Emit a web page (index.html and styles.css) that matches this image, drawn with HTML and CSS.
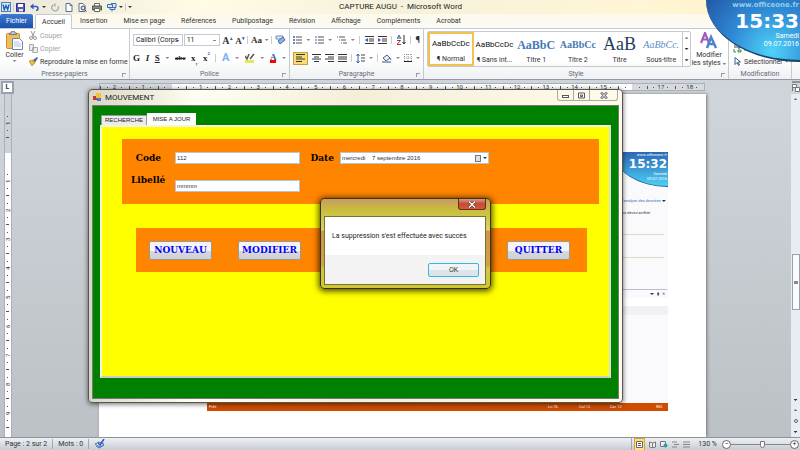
FILE: index.html
```
<!DOCTYPE html>
<html lang="fr">
  <head>
    <meta charset="UTF-8" />
    <meta name="viewport" content="width=device-width, initial-scale=1.0" />
    <title>CAPTURE AUGU - Microsoft Word</title>
    <link rel="stylesheet" href="styles.css">
  </head>
  <body>
    <div class="word">
      <!-- Title bar -->
      <header class="titlebar">
        <div class="quick">
          <svg width="10" height="10" viewBox="0 0 10 10"><rect x="0.5" y="0.5" width="9" height="9" fill="#dceafa" stroke="#4a7fc0"/><path d="M2 2.5l1.3 5L5 3.5l1.7 4 1.3-5" fill="none" stroke="#1c5fae" stroke-width="1.4"/></svg>
          <i class="sep"></i>
          <svg width="9" height="9" viewBox="0 0 9 9"><path d="M0.5 0.5h8v8h-8z" fill="#5a55b5" stroke="#36328a"/><path d="M2 1h5v3H2z" fill="#fff"/><path d="M3 6h4v2.500H3z" fill="#dfe3f5"/></svg>
          <svg class="undo" width="10" height="8" viewBox="0 0 10 8"><path d="M2 3.500h4a2 2 0 0 1 0 4" fill="none" stroke="#3157c4" stroke-width="1.500"/><path d="M0 3.500l3.500-3v6z" fill="#3157c4"/></svg>
          <b class="caret dark"></b>
          <svg class="gap" width="9" height="9" viewBox="0 0 9 9"><path d="M2 2a3.300 3.300 0 1 0 5 1" fill="none" stroke="#a9acb2" stroke-width="1.300"/><path d="M4.500 0v4L2 2z" fill="#a9acb2"/></svg>
          <svg class="gap" width="8" height="9" viewBox="0 0 8 9"><path d="M1 0.500h4l2 2v6H1z" fill="#fff" stroke="#56708f"/><path d="M5 0.500v2h2" fill="none" stroke="#56708f"/></svg>
          <svg class="gap" width="9" height="9" viewBox="0 0 9 9"><path d="M1 0.500h4l2 2v6H1z" fill="#fff" stroke="#56708f"/><circle cx="5" cy="5" r="2" fill="#cfe3f7" stroke="#446"/><path d="M6.500 6.500l2 2" stroke="#446"/></svg>
          <svg class="gap" width="10" height="9" viewBox="0 0 10 9"><path d="M2.500 3V0.500h5V3" fill="#fff" stroke="#666"/><path d="M0.500 3h9v4h-9z" fill="#888" stroke="#555"/><path d="M2.500 5.500h5v3h-5z" fill="#fff" stroke="#666"/><path d="M7 5h2v2H7z" fill="#49a34b"/></svg>
          <svg class="gap" width="10" height="9" viewBox="0 0 10 9"><path d="M0.500 1.500h5v3h-5zM4 0.500h5v4H7M3 4.500h5v2H3z" fill="#d6e7f9" stroke="#3a6fb0"/><path d="M5 6.500v2" stroke="#3a6fb0"/></svg>
          <b class="caret dark"></b>
          <i class="sep"></i>
          <b class="caret dark"></b>
        </div>
        <h1>CAPTURE AUGU &nbsp;- &nbsp;Microsoft Word</h1>
      </header>

      <nav class="tabs">
        <button class="file">Fichier</button>
        <button class="active">Accueil</button>
        <button>Insertion</button>
        <button>Mise en page</button>
        <button>Références</button>
        <button>Publipostage</button>
        <button>Révision</button>
        <button>Affichage</button>
        <button>Compléments</button>
        <button>Acrobat</button>
      </nav>

      <!-- Ribbon -->
      <div class="ribbon">
        <section class="group clipboard">
          <div class="tools">
            <button class="paste">
              <svg width="17" height="19" viewBox="0 0 17 19"><rect x="0.500" y="2.500" width="13" height="15" rx="1" fill="#f0bd5c" stroke="#c98e33"/><path d="M3.500 3.500h7V2H9a2 2 0 0 0-4 0H3.500z" fill="#c3c6ca" stroke="#77797d"/><path d="M6.500 7.500h7l3 3v8h-10z" fill="#fff" stroke="#6f87a5"/><path d="M8 11h5M8 13h7M8 15h7" stroke="#aec2da"/></svg>
              <span>Coller</span>
              <b class="caret"></b>
            </button>
            <div class="stack">
              <button class="off"><svg width="9" height="9" viewBox="0 0 9 9"><path d="M2 0l3 6M6 0L3 6" stroke="#999"/><circle cx="2" cy="7" r="1.500" fill="none" stroke="#999"/><circle cx="6" cy="7" r="1.500" fill="none" stroke="#999"/></svg>Couper</button>
              <button class="off"><svg width="9" height="9" viewBox="0 0 9 9"><path d="M0.500 0.500h4v6h-4zM3.500 3.500h5v5h-5z" fill="#eee" stroke="#aaa"/></svg>Copier</button>
              <button><svg width="9" height="9" viewBox="0 0 9 9"><path d="M0 4l4-1 2 3-3 3z" fill="#f2ba3d" stroke="#a87919" stroke-width=".6"/><path d="M4 3l2 2.500L9 1 8 0z" fill="#4c6b94"/></svg>Reproduire la mise en forme</button>
            </div>
          </div>
          <h2>Presse-papiers<i class="launcher"></i></h2>
        </section>

        <section class="group font">
          <div class="tools rows">
            <div class="row">
              <select class="family" aria-label="Police"><option>Calibri (Corps</option></select><select class="size" aria-label="Taille"><option>11</option></select>
              <span class="serif big">A<sup>▴</sup></span>
              <span class="serif">A<sup>▾</sup></span>
              <i class="sep"></i>
              <span class="serif">Aa</span><b class="caret"></b>
              <i class="sep"></i>
              <svg width="11" height="10" viewBox="0 0 11 10"><path d="M1 1h7v3H1z" fill="#dde9f8" stroke="#6e90bd"/><path d="M3 6l5-4 2 3-5 4z" fill="#8fb5df" stroke="#426a9c"/></svg>
            </div>
            <div class="row letters">
              <b>G</b><em>I</em><u>S</u><b class="caret"></b><s>abc</s><span>x<sub>,</sub></span><span>x<sup>²</sup></span>
              <i class="sep"></i>
              <span class="effect">A</span><b class="caret"></b>
              <svg width="10" height="10" viewBox="0 0 10 10"><path d="M0 7h9v3H0z" fill="#e7e75a"/><path d="M0 3l2 3 2-5M5 6l4-5" fill="none" stroke="#555" stroke-width="1.500"/></svg><b class="caret"></b>
              <span class="color">A</span><b class="caret"></b>
            </div>
          </div>
          <h2>Police<i class="launcher"></i></h2>
        </section>

        <section class="group paragraph">
          <div class="tools rows">
            <div class="row">
              <svg width="9" height="8" viewBox="0 0 9 8"><path d="M0 1h2M0 4h2M0 7h2" stroke="#3562a8" stroke-width="1.500"/><path d="M3 1h6M3 4h6M3 7h6" stroke="#555"/></svg><b class="caret"></b>
              <svg width="9" height="8" viewBox="0 0 9 8"><path d="M1 0v2M1 3v2M1 6v2" stroke="#3562a8"/><path d="M3 1h6M3 4h6M3 7h6" stroke="#555"/></svg><b class="caret"></b>
              <svg width="10" height="8" viewBox="0 0 10 8"><path d="M0 1h1M2 4h1M4 7h1" stroke="#3562a8"/><path d="M2 1h6M4 4h5M6 7h4" stroke="#555"/></svg><b class="caret"></b>
              <i class="sep"></i>
              <svg width="9" height="8" viewBox="0 0 9 8"><path d="M0 .5h9M4 3h5M4 5h5M0 7.500h9" stroke="#333"/><path d="M3 2v4L0 4z" fill="#3562a8"/></svg>
              <svg width="9" height="8" viewBox="0 0 9 8"><path d="M0 .5h9M4 3h5M4 5h5M0 7.500h9" stroke="#333"/><path d="M0 2v4l3-2z" fill="#3562a8"/></svg>
              <i class="sep"></i>
              <svg width="9" height="10" viewBox="0 0 9 10"><path d="M0 4l2-4 2 4M1 3h2" fill="none" stroke="#3562a8"/><path d="M0 5.500h3.500L0 9.500h4" fill="none" stroke="#a33"/><path d="M7 0v9M5.500 7L7 9l1.500-2" fill="none" stroke="#333"/></svg>
              <i class="sep"></i>
              <span class="pilcrow">¶</span>
            </div>
            <div class="row">
              <button class="on" aria-label="Gauche"><svg width="9" height="8" viewBox="0 0 9 8"><path d="M0 .5h9M0 3h6M0 5h9M0 7.500h6" stroke="#333"/></svg></button>
              <svg width="9" height="8" viewBox="0 0 9 8"><path d="M0 .5h9M2 3h5M0 5h9M2 7.500h5" stroke="#333"/></svg>
              <svg width="9" height="8" viewBox="0 0 9 8"><path d="M0 .5h9M3 3h6M0 5h9M3 7.500h6" stroke="#333"/></svg>
              <svg width="9" height="8" viewBox="0 0 9 8"><path d="M0 .5h9M0 3h9M0 5h9M0 7.500h9" stroke="#333"/></svg>
              <i class="sep"></i>
              <svg width="9" height="9" viewBox="0 0 9 9"><path d="M2 0v9M.5 2L2 0l1.500 2M.5 7L2 9l1.500-2" fill="none" stroke="#3562a8"/><path d="M5 1h4M5 4h4M5 7h4" stroke="#444"/></svg><b class="caret"></b>
              <i class="sep"></i>
              <svg width="10" height="9" viewBox="0 0 10 9"><path d="M1 4l4-3 3 3-4 3z" fill="#e4edf8" stroke="#4a668c"/><path d="M8 4l1 2" stroke="#3562a8"/><path d="M0 8h9" stroke="#9ab" stroke-width="2"/></svg><b class="caret"></b>
              <svg width="8" height="8" viewBox="0 0 8 8"><path d="M.5 0v7M4 0v7M7.500 0v7M0 .5h8M0 4h8" stroke="#999" stroke-dasharray="1 1"/><path d="M0 7.500h8" stroke="#222"/></svg><b class="caret"></b>
            </div>
          </div>
          <h2>Paragraphe<i class="launcher"></i></h2>
        </section>

        <section class="group style">
          <div class="tools">
            <div class="gallery">
              <button class="chosen"><span class="sample">AaBbCcDc</span>¶ Normal</button>
              <button><span class="sample">AaBbCcDc</span>¶ Sans int...</button>
              <button><span class="sample t1">AaBbC</span>Titre 1</button>
              <button><span class="sample t2">AaBbCc</span>Titre 2</button>
              <button><span class="sample t3">AaB</span>Titre</button>
              <button><span class="sample t4">AaBbCc.</span>Sous-titre</button>
              <div class="arrows"><b class="caret up"></b><b class="caret dark"></b><b class="caret dark"></b></div>
            </div>
            <button class="modify">
              <svg width="18" height="17" viewBox="0 0 18 17"><path d="M1 11L5 1l4 10M2.500 7.500h5" fill="none" stroke="#a559b8" stroke-width="2.200"/><path d="M7 16l4-11 5 11M8.500 12h6" fill="none" stroke="#4b84cf" stroke-width="2.500"/></svg>
              <span>Modifier</span>
              <span>les styles <b class="caret"></b></span>
            </button>
          </div>
          <h2>Style<i class="launcher"></i></h2>
        </section>

        <section class="group edit">
          <div class="tools">
            <div class="stack">
              <button><svg width="9" height="9" viewBox="0 0 9 9"><path d="M1 1h3M1 3h3M5 0v4h2V2H5" fill="none" stroke="#444"/><path d="M1 5v3h2M5 6h3v2H5z" fill="none" stroke="#27903b"/></svg>Re</button>
              <button><svg width="9" height="9" viewBox="0 0 9 9"><path d="M2 .5v7l2-2 1.500 3 1-.5L5 5h2.500z" fill="#fff" stroke="#3c5f93"/></svg>Sélectionner <b class="caret"></b></button>
            </div>
          </div>
          <h2>Modification</h2>
        </section>
      </div>

      <!-- Horizontal ruler -->
      <div class="ruler-row">
        <button class="tabstop">L</button>
        <div class="ruler">
          <span>2</span><span>1</span><span></span><span>1</span><span>2</span><span>3</span><span>4</span><span>5</span><span>6</span><span>7</span><span>8</span><span>9</span><span>10</span><span>11</span><span>12</span><span>13</span><span>14</span><span>15</span><span></span><span>17</span><span>18</span>
        </div>
        <button class="toggle" aria-label="Règle"><svg width="8" height="8" viewBox="0 0 8 8"><path d="M.5 7V.5h4v3h-4M3.500 3.500h4v4h-4z" fill="#fff" stroke="#777"/></svg></button>
      </div>

      <!-- Document -->
      <main class="document">
        <div class="vruler">
          <span></span><span>1</span><span></span><span>1</span><span>2</span><span>3</span><span>4</span><span>5</span><span>6</span><span>7</span><span>8</span><span>9</span><span></span>
        </div>
        <article class="page">
          <div class="capture">
            <div class="capture-body">
              <div class="mini-clock">
                <span>www.officeone.fr</span>
                <strong>15:32</strong>
                <span>Samedi</span>
                <span>09.07.2016</span>
              </div>
              <p class="blue">l'analyse des données <b class="caret dark"></b></p>
              <p>us devez arrêter</p>
              <hr /><hr />
              <div class="pane"><b class="caret dark"></b><span>▮</span><span>✕</span></div>
              <div class="strip"></div>
            </div>
            <div class="capture-status"><span>Prêt</span><span>Ln 76</span><span>Col 12</span><span>Car 12</span><span>INS</span></div>
          </div>
        </article>
        <div class="scrollbar">
          <b class="caret up"></b>
          <i class="thumb"></i>
          <b class="caret dark"></b>
          <b class="caret up"></b>
          <i class="dot"></i>
          <b class="caret dark"></b>
        </div>
      </main>

      <footer class="statusbar">
        <span>Page : 2 sur 2</span>
        <span>Mots : 0</span>
        <svg class="proof" width="11" height="10" viewBox="0 0 11 10"><path d="M1 5l4-2 5 2-4 3z" fill="#fff" stroke="#4b73b8"/><path d="M2 7l3 2 5-3" fill="none" stroke="#4b73b8"/><path d="M4 4l2 2 4-6" fill="none" stroke="#2c56c0" stroke-width="1.500"/></svg>
        <div class="views">
          <button class="on" aria-label="Page"><svg width="7" height="7" viewBox="0 0 7 7"><path d="M.5 .5h6v6h-6z" fill="#fff" stroke="#666"/><path d="M2 2.500h3M2 4.500h3" stroke="#555"/></svg></button>
          <svg width="7" height="7" viewBox="0 0 7 7"><path d="M.5 1l3 1 3-1v5l-3 1-3-1zM3.500 2v5" fill="#eee" stroke="#777"/></svg>
          <svg width="8" height="7" viewBox="0 0 8 7"><path d="M.5 .5h5v5h-5z" fill="#eee" stroke="#777"/><circle cx="5.500" cy="4.500" r="2" fill="#39a"/></svg>
          <svg width="7" height="7" viewBox="0 0 7 7"><path d="M0 1h5M2 3.500h5M0 6h5" stroke="#888"/></svg>
          <svg width="7" height="7" viewBox="0 0 7 7"><path d="M0 1h7M0 3.500h7M0 6h7" stroke="#888"/></svg>
        </div>
        <span class="zoom">130 %</span>
        <button class="round">−</button>
        <input type="range" min="0" max="100" value="54" aria-label="Zoom" />
        <button class="round">+</button>
      </footer>
    </div>

    <!-- Desktop clock gadget -->
    <aside class="clock">
      <span class="site">www.officeone.fr</span>
      <strong>15:33</strong>
      <span>Samedi</span>
      <span>09.07.2016</span>
    </aside>

    <!-- MOUVEMENT form -->
    <div class="window">
      <div class="caption">
        <svg width="9" height="9" viewBox="0 0 9 9"><path d="M0 3h4v4H0z" fill="#c23a2b"/><path d="M3 0h5v5H3z" fill="#f3c13c"/><path d="M4 5h4v3H4z" fill="#4b79c9"/></svg>
        <span>MOUVEMENT</span>
        <div class="controls">
          <button aria-label="Réduire"><svg width="7" height="7" viewBox="0 0 7 7"><rect x=".5" y="3.500" width="6" height="2" fill="#fff" stroke="#556"/></svg></button>
          <button aria-label="Agrandir"><svg width="7" height="7" viewBox="0 0 7 7"><path d="M.5 1h6v5h-6zM2.500 3h2v1.500h-2z" fill="#fff" stroke="#556"/></svg></button>
          <button class="wide" aria-label="Fermer"><svg width="8" height="7" viewBox="0 0 8 7"><path d="M1 .5l6 6M7 .5l-6 6" stroke="#556" stroke-width="2.400"/><path d="M1 .5l6 6M7 .5l-6 6" stroke="#fff"/></svg></button>
        </div>
      </div>
      <div class="client">
        <div class="form-tabs">
          <button>RECHERCHE</button>
          <button class="active">MISE A JOUR</button>
        </div>
        <div class="form-page">
          <form class="fields">
            <label for="code">Code</label>
            <input type="text" id="code" value="112" />
            <label class="near" for="date">Date</label>
            <div class="date">
              <input type="text" id="date" value="mercredi    7 septembre 2016" />
              <svg width="6" height="7" viewBox="0 0 6 7"><rect x=".5" y=".5" width="5" height="6" fill="#dce0e8" stroke="#777"/></svg>
              <b class="caret dark"></b>
            </div>
            <label class="up" for="libelle">Libellé</label>
            <input type="text" id="libelle" value="mmmm" />
          </form>
          <div class="actions">
            <button>NOUVEAU</button>
            <button>MODIFIER</button>
            <button class="last">QUITTER</button>
          </div>
        </div>
      </div>
    </div>

    <!-- Message box -->
    <div class="dialog" role="alertdialog" aria-label="Message">
      <button class="close" aria-label="Fermer"><svg width="8" height="7" viewBox="0 0 8 7"><path d="M1 .5l6 6M7 .5l-6 6" stroke="#533" stroke-width="2.600"/><path d="M1 .5l6 6M7 .5l-6 6" stroke="#fff" stroke-width="1.400"/></svg></button>
      <div class="message">
        <p>La suppression s'est effectuée avec succès</p>
        <div class="answer"><button>OK</button></div>
      </div>
    </div>
  </body>
</html>
```

FILE: styles.css
```
:root {
  --ui: Roboto, "Noto Sans", sans-serif;
  --form: "Liberation Sans", Arial, sans-serif;
  --book: "DejaVu Serif", serif;
  --line: #c5cad1;
}
* {
  margin: 0;
  padding: 0;
  box-sizing: border-box;
}

html,
body {
  height: 100%;
  overflow: hidden;
}
body {
  font-family: var(--ui);
  font-size: 7px;
  line-height: 10px;
  color: #333;
}
button,
input,
select {
  font: inherit;
  color: inherit;
  border: none;
  background: none;
}
svg {
  flex: none;
  display: block;
}

.word {
  display: flex;
  flex-direction: column;
  height: 100vh;
}

.caret {
  display: inline-block;
  flex: none;
  width: 4px;
  height: 2px;
  background: #888;
  clip-path: polygon(0 0, 100% 0, 50% 100%);
}
.caret.dark {
  background: #333;
}
.caret.up {
  background: #777;
  clip-path: polygon(50% 0, 100% 100%, 0 100%);
}
.sep {
  flex: none;
  width: 1px;
  height: 8px;
  background: #c8ccd2;
}

/* title bar and tabs */
.titlebar {
  display: flex;
  align-items: center;
  height: 14px;
  background: linear-gradient(90deg, #e9e7da, #fffbe6 25%, #f6f1dc 50%, #fff6d5 80%, #fdf0c4);
}
.quick {
  display: flex;
  align-items: center;
  gap: 2px;
  flex: 1;
  padding-left: 1px;
}
.quick .gap {
  margin-left: 3px;
}
.quick .undo {
  margin-left: 3px;
}
.titlebar h1 {
  font-size: 8px;
  font-weight: normal;
  color: #222;
}
.titlebar::after {
  content: "";
  flex: 1;
}
.tabs {
  display: flex;
  height: 15px;
  background: linear-gradient(#fdfaec, #fbfaf4);
  border-bottom: 1px solid var(--line);
}
.tabs button {
  padding: 0 8px;
  line-height: 14px;
}
.tabs .file {
  width: 33px;
  padding: 0;
  margin-right: 2px;
  background: linear-gradient(#3c7ad0, #1b51ab);
  border-radius: 2px 2px 0 0;
  color: #fff;
}
.tabs .active {
  height: 15px;
  width: 37px;
  padding: 0;
  background: #fff;
  border: 1px solid var(--line);
  border-bottom: none;
  border-radius: 2px 2px 0 0;
}

/* ribbon */
.ribbon {
  display: flex;
  height: 51px;
  background: linear-gradient(#fff 60%, #eef0f3);
  border-bottom: 1px solid #8f98a3;
}
.group {
  display: flex;
  flex-direction: column;
  border-right: 1px solid var(--line);
}
.clipboard {
  width: 130px;
}
.font {
  width: 160px;
}
.paragraph {
  width: 134px;
}
.style {
  width: 305px;
}
.edit {
  width: 63px;
}
.group h2 {
  position: relative;
  height: 10px;
  font-size: 7px;
  font-weight: normal;
  text-align: center;
  color: #666c75;
}
.launcher {
  position: absolute;
  right: 3px;
  bottom: 2px;
  width: 4px;
  height: 4px;
  border-top: 1px solid #999;
  border-left: 1px solid #999;
}
.tools {
  display: flex;
  flex: 1;
}
.tools.rows {
  flex-direction: column;
  padding: 4px 3px 0;
  gap: 4px;
}
.row {
  display: flex;
  align-items: center;
  justify-content: space-between;
  height: 14px;
}
.paste {
  display: flex;
  flex: none;
  flex-direction: column;
  align-items: center;
  width: 29px;
  padding-top: 2px;
}
.stack {
  display: flex;
  flex-direction: column;
}
.stack button {
  display: flex;
  align-items: center;
  gap: 2px;
  height: 13px;
  white-space: nowrap;
}
.stack .off {
  color: #a0a0a0;
}
.family,
.size {
  appearance: none;
  height: 12px;
  padding-left: 2px;
  border: 1px solid var(--line);
  background: linear-gradient(#888, #888) right 3px center / 3px 1px no-repeat;
  color: #222;
}
.family {
  width: 50px;
}
.size {
  width: 36px;
  margin-left: -2px;
}
.serif,
.letters {
  font-family: "Liberation Serif", serif;
  font-size: 9px;
  font-weight: bold;
}
.serif.big {
  font-size: 10px;
}
.serif sup {
  font-size: 5px;
  color: #3562a8;
}
.letters {
  color: #222;
}
.letters s {
  font-size: 7px;
}
.letters sub,
.letters sup {
  line-height: 0;
  color: #3562a8;
}
.letters .effect {
  font-family: var(--ui);
  font-size: 11px;
  color: #7fb2ea;
}
.letters .color {
  height: 10px;
  border-bottom: 3px solid #f00;
  line-height: 8px;
  color: #35558a;
}
.pilcrow {
  font-size: 9px;
  font-weight: bold;
}
.row .on {
  height: 13px;
  padding: 0 2px;
  background: #fbdc74;
  border: 1px solid #c7a03c;
}
.gallery {
  display: flex;
  width: 264px;
  height: 36px;
  margin: 2px 0 0 3px;
  border: 1px solid var(--line);
  border-radius: 2px;
}
.gallery button {
  flex: 1 0 0;
  display: flex;
  flex-direction: column;
  align-items: center;
  white-space: nowrap;
}
.gallery .chosen {
  border: 2px solid #f0c350;
}
.gallery .chosen .sample {
  height: 18px;
}
.sample {
  display: flex;
  align-items: flex-end;
  justify-content: center;
  height: 20px;
  margin-bottom: 3px;
  font-size: 8px;
  line-height: 14px;
  color: #111;
}
.sample.t1,
.sample.t2 {
  font: bold 12px/14px "Liberation Serif", serif;
  color: #4679b6;
}
.sample.t2 {
  font-size: 10px;
}
.sample.t3 {
  font: 18px/16px "Liberation Serif", serif;
  color: #1f3c60;
}
.sample.t4 {
  font: italic 10px/14px "Liberation Serif", serif;
  color: #5b8cc4;
}
.arrows {
  display: flex;
  flex-direction: column;
  align-items: center;
  justify-content: space-around;
  width: 8px;
  border-left: 1px solid var(--line);
}
.modify {
  display: flex;
  flex: none;
  flex-direction: column;
  align-items: center;
  width: 36px;
  padding-top: 3px;
  line-height: 8px;
  white-space: nowrap;
}
.modify svg {
  margin-bottom: 2px;
}
.edit .stack {
  padding: 13px 0 0 4px;
}

/* rulers */
.ruler-row {
  display: flex;
  align-items: center;
  height: 14px;
  background: #cfd4da;
}
.tabstop {
  width: 13px;
  height: 13px;
  margin-left: 1px;
  border: 2px solid #9ba2ab;
  background: #fff;
  font-weight: bold;
  line-height: 9px;
}
.ruler {
  display: flex;
  width: 606px;
  height: 8px;
  margin-left: 85px;
  border: 1px solid #a9b0b8;
  background: linear-gradient(90deg, #d6dade 72px, #fff 72px, #fff 532px, #d6dade 532px);
  line-height: 6px;
  font-size: 6px;
}
.ruler span {
  flex: 1;
  text-align: center;
  background:
    linear-gradient(#555, #555) left center / 1px 3px no-repeat,
    linear-gradient(#555, #555) 25% center / 1px 1px no-repeat,
    linear-gradient(#555, #555) 75% center / 1px 1px no-repeat;
}
.toggle {
  margin-left: auto;
  height: 12px;
  border-top: 2px solid #8b929b;
}

/* document */
.document {
  display: flex;
  flex: 1;
  min-height: 0;
  background: linear-gradient(#d0d5db, #bcc1c6);
}
.vruler {
  flex: none;
  width: 8px;
  margin: 0 87px 0 4px;
  overflow: hidden;
  background: linear-gradient(#cdd2d8 59px, #fff 59px);
  border-left: 1px solid #a9b0b8;
  border-right: 1px solid #a9b0b8;
  font-size: 6px;
}
.vruler span {
  display: flex;
  align-items: center;
  height: 29px;
  writing-mode: vertical-rl;
  transform: rotate(180deg);
  justify-content: center;
  line-height: 6px;
  background:
    linear-gradient(#555, #555) center top / 3px 1px no-repeat,
    linear-gradient(#555, #555) center 25% / 1px 1px no-repeat,
    linear-gradient(#555, #555) center 75% / 1px 1px no-repeat;
}
.vruler span:first-child {
  height: 15px;
}
.page {
  width: 607px;
  padding: 58px 38px 26px 108px;
  background: #fff;
  box-shadow: 1px 0 3px #777;
}
.capture {
  display: flex;
  flex-direction: column;
  height: 100%;
  font-size: 4px;
  line-height: 6px;
}
.capture-body {
  flex: 1;
  display: flex;
  flex-direction: column;
  align-self: flex-end;
  width: 54px;
  background: #fafafc;
}
.mini-clock {
  display: flex;
  flex-direction: column;
  align-items: flex-end;
  height: 35px;
  margin-bottom: 11px;
  padding-right: 1px;
  overflow: hidden;
  background: linear-gradient(#2c67b5, #4cd0f5);
  border-bottom: 1px solid #1f5a86;
  border-radius: 0 0 0 100%;
  color: #fff;
  line-height: 5px;
}
.mini-clock strong {
  font: bold 12px/14px "DejaVu Sans", sans-serif;
}
.capture-body p {
  margin-bottom: 6px;
  padding-left: 8px;
  white-space: nowrap;
}
.capture-body .blue {
  color: #2f76c0;
}
.capture-body hr {
  border: none;
  border-top: 1px solid #dcd9cb;
  margin: 12px 4px 10px 0;
}
.pane {
  display: flex;
  justify-content: flex-end;
  align-items: center;
  gap: 3px;
  margin: 21px 1px 0 0;
  padding: 1px 2px;
  border-top: 1px solid #b9bdd2;
}
.strip {
  height: 17px;
  background: #f1f1f5;
  border-top: 8px solid #fff;
}
.capture-status {
  display: grid;
  grid-template-columns: 1fr 31px 31px 46px 10px;
  height: 8px;
  padding: 1px 2px;
  background: #cf4c00;
  color: #fff;
}
.scrollbar {
  display: flex;
  flex-direction: column;
  align-items: center;
  gap: 8px;
  width: 9px;
  margin-left: auto;
  padding: 4px 0;
  background: #e8edf4;
}
.thumb {
  width: 8px;
  height: 56px;
  margin: 146px 0 auto;
  background: linear-gradient(#888, #888) center / 4px 3px no-repeat, #fafbfc;
  border: 1px solid #9aa1aa;
}
.dot {
  width: 4px;
  height: 4px;
  border: 1px solid #666;
  border-radius: 50%;
}

/* status bar */
.statusbar {
  display: flex;
  align-items: center;
  height: 13px;
  padding: 0 1px 0 5px;
  background: linear-gradient(#eef0f3, #c7ccd3);
  border-top: 1px solid #8c939c;
}
.statusbar > span {
  padding-right: 5px;
  margin-right: 5px;
  border-right: 1px solid #a4a9b0;
}
.views {
  display: flex;
  align-items: center;
  gap: 4px;
  margin-left: auto;
  padding-left: 2px;
  border-left: 1px solid #a4a9b0;
}
.views .on {
  padding: 2px 1px;
  background: #fde08a;
  border: 1px solid #d1a53a;
}
.statusbar .zoom {
  margin: 0 0 0 8px;
  border: none;
}
.round {
  width: 9px;
  height: 9px;
  border: 1px solid #666;
  border-radius: 50%;
  background: #fff;
  line-height: 7px;
}
.statusbar input {
  appearance: none;
  width: 59px;
  height: 1px;
  background: #888;
}
.statusbar input::-webkit-slider-thumb {
  appearance: none;
  width: 5px;
  height: 7px;
  background: #fff;
  border: 1px solid #777;
  border-radius: 0 0 3px 3px;
}

/* clock gadget */
.clock {
  position: absolute;
  top: 0;
  right: 0;
  display: flex;
  flex-direction: column;
  align-items: flex-end;
  width: 94px;
  height: 62px;
  padding-right: 1px;
  border-radius: 0 0 0 100%;
  background: radial-gradient(circle at 70% 85%, #4fd4f8, #2f8ad6 50%, #2158a5);
  border-bottom: 2px solid #1a4670;
  color: #fff;
  line-height: 8px;
}
.clock .site {
  font: bold 7px/10px "DejaVu Sans", sans-serif;
  color: #8fd0e8;
}
.clock strong {
  font: bold 20px/22px "DejaVu Sans", sans-serif;
}

/* form window */
.window {
  position: absolute;
  top: 89px;
  left: 88px;
  width: 535px;
  padding: 0 3px 3px;
  border: 1px solid #555;
  border-radius: 4px;
  background: linear-gradient(90deg, #d9d6c4, #fffef0 20%, #f4efd9 50%, #fffbe8);
  box-shadow: 0 1px 5px rgba(0, 0, 0, 0.6);
}
.caption {
  display: flex;
  align-items: center;
  gap: 3px;
  height: 15px;
  padding-left: 1px;
  font-size: 8px;
  color: #222;
}
.controls {
  display: flex;
  height: 11px;
  margin: 0 1px 0 auto;
  align-self: flex-start;
  border: 1px solid #aaa;
  border-top: none;
  border-radius: 0 0 3px 3px;
}
.controls button {
  display: flex;
  align-items: center;
  justify-content: center;
  width: 16px;
  border-right: 1px solid #aaa;
}
.controls .wide {
  width: 27px;
  border: none;
}
.client {
  height: 294px;
  padding: 7px 7px 20px;
  display: flex;
  flex-direction: column;
  background: #008000;
  border: 1px solid #777;
  font-family: var(--form);
  font-size: 6px;
}
.form-tabs {
  display: flex;
  align-items: flex-end;
}
.form-tabs button {
  width: 46px;
  height: 10px;
  margin-left: 1px;
  background: #ececec;
  border: 1px solid #999;
  border-bottom: none;
  color: #222;
  line-height: 9px;
}
.form-tabs .active {
  width: 49px;
  height: 12px;
  margin-left: 0;
  background: #fff;
  border-color: #fff;
}
.form-page {
  flex: 1;
  padding: 12px 10px 0 20px;
  background: #ff0;
  border: 2px solid #f4f4e0;
  border-right-color: #ddd;
  border-bottom-color: #ccc;
}
.fields {
  display: grid;
  grid-template-columns: 42px 125px 36px 149px;
  grid-template-rows: 12px 12px;
  column-gap: 2px;
  row-gap: 16px;
  height: 65px;
  padding: 13px 0 0 9px;
  background: #ff8400;
}
.fields label {
  padding-right: 12px;
  font: bold 9px/12px var(--book);
  text-align: right;
  color: #000;
}
.fields input,
.date {
  width: 100%;
  height: 12px;
  padding: 0 1px;
  background: #fff;
  border: 1px solid #b5c4d0;
}
.fields .near {
  padding-right: 4px;
}
.fields .up {
  margin-top: -6px;
  padding-right: 8px;
}
.date {
  display: flex;
  align-items: center;
  gap: 2px;
}
.date input {
  flex: 1;
  height: 10px;
  padding: 0;
  border: none;
  white-space: pre;
}
.actions {
  display: flex;
  align-items: center;
  gap: 26px;
  height: 44px;
  margin: 24px 12px 0 14px;
  padding: 0 17px 0 13px;
  background: #ff8400;
}
.actions button {
  min-width: 63px;
  height: 19px;
  border: 1px solid #999;
  border-radius: 2px;
  background: linear-gradient(#f4f4f4 50%, #dadada 50%, #d0d0d0);
  font: bold 9px/15px var(--book);
  color: #00f;
}
.actions .last {
  margin-left: auto;
}

/* message box */
.dialog {
  position: absolute;
  top: 198px;
  left: 320px;
  display: flex;
  flex-direction: column;
  width: 171px;
  height: 91px;
  padding: 0 4px 4px 3px;
  border: 1px solid #3b3312;
  border-radius: 4px;
  background: linear-gradient(#c99b62, #c9bd3c 12%, #d8d26a 35%, #cf9350 36%, #d2a348 75%, #cfc738 78%);
  box-shadow: 0 1px 6px 1px rgba(0, 0, 0, 0.75);
}
.close {
  display: flex;
  flex: none;
  align-items: center;
  justify-content: center;
  align-self: flex-end;
  width: 28px;
  height: 11px;
  background: linear-gradient(#dc9a87, #c54a30 50%, #d25d3c);
  border: 1px solid #6e2b1c;
  border-top: none;
  border-radius: 0 0 3px 3px;
}
.message {
  display: flex;
  flex-direction: column;
  flex: 1;
  margin-top: 6px;
  border: 1px solid #77722f;
  background: #fff;
}
.message p {
  flex: 1;
  padding-left: 7px;
  line-height: 38px;
  color: #222;
}
.answer {
  display: flex;
  justify-content: flex-end;
  height: 29px;
  padding: 8px 6px 0 0;
  background: #f3f3f3;
}
.answer button {
  width: 51px;
  height: 14px;
  border: 1px solid #3db5dc;
  border-radius: 2px;
  background: linear-gradient(#f2f5f7 50%, #dde5ea 50%);
}
```
